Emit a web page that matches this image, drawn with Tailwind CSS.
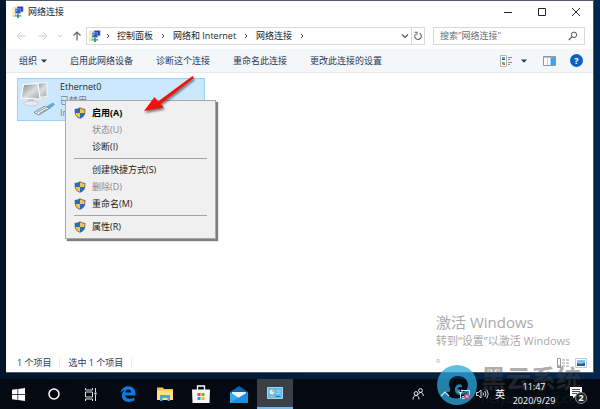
<!DOCTYPE html>
<html lang="zh-CN">
<head>
  <meta charset="UTF-8">
  <title>网络连接</title>
  <meta name="viewport" content="width=device-width, initial-scale=1.0">
  <script src="https://cdn.jsdelivr.net/npm/@tailwindcss/browser@4"></script>
</head>
<body class="relative flex h-screen flex-col overflow-hidden bg-gradient-to-r from-[#03152b] to-[#04264c] font-['Open_Sans','Noto_Sans_CJK_SC',sans-serif] text-[9px] leading-3 text-[#222]">

  <!-- Shared icons -->
  <svg class="hidden">
    <symbol id="shield" viewBox="0 0 12 12">
      <path d="M6 .3C4.6 1.4 2.800 1.900.7 1.900V5.500C.7 8.600 3 10.600 6 11.800 9 10.600 11.300 8.600 11.300 5.500V1.900C9.200 1.900 7.400 1.400 6 .3Z" fill="#55606c"/>
      <path d="M6 1.300C4.700 2.200 3.200 2.600 1.500 2.700V6H6Z" fill="#1c6fd0"/>
      <path d="M6 1.300C7.300 2.200 8.800 2.600 10.500 2.700V6H6Z" fill="#fcc43a"/>
      <path d="M1.500 6H6V10.900C3.500 9.900 1.700 8.400 1.500 6Z" fill="#fcc43a"/>
      <path d="M10.500 6H6V10.900C8.500 9.900 10.300 8.400 10.500 6Z" fill="#1c6fd0"/>
    </symbol>
    <symbol id="netfolder" viewBox="0 0 13 13">
      <path d="M.5 1.500 4.500 .5V11L.5 12Z" fill="#f2dc94"/>
      <path d="M1 2 3 1.500V10L1 10.500Z" fill="#fbf0c4"/>
      <rect x="5.500" y=".8" width="6.500" height="5.500" fill="#1d35b8" stroke="#9aa7b8" stroke-width=".7"/>
      <rect x="3.500" y="3" width="6" height="5" fill="#2c55dc" stroke="#a9b4c4" stroke-width=".7"/>
      <path d="M4.500 4h2.500l-2.500 2.500z" fill="#7fb4ff"/>
      <path d="M5.500 8.500h2V10H10v1.500H7.500V13H5.500v-1.500H3V10h2.500z" fill="#27a567"/>
    </symbol>
    <symbol id="chev" viewBox="0 0 6 6"><path d="M2 1 4 3 2 5" fill="none" stroke="#444" stroke-width="1"/></symbol>
  </svg>

  <!-- Window -->
  <main class="relative mx-1.5 mb-1.5 flex min-h-0 flex-1 flex-col border-t border-r border-b border-[#555b66] bg-white">
    <header class="flex h-[22px] items-center pl-1.5">
      <svg class="mr-1 size-3"><use href="#netfolder"/></svg>
      <h1 class="flex-1">网络连接</h1>
      <button aria-label="最小化" class="flex w-[34px] justify-center"><svg class="size-2.5" viewBox="0 0 10 10"><path d="M1 5.500h8" stroke="#222"/></svg></button>
      <button aria-label="最大化" class="flex w-[34px] justify-center"><svg class="size-2.5" viewBox="0 0 10 10"><path d="M1.500 1.500h7v7h-7z" fill="none" stroke="#222"/></svg></button>
      <button aria-label="关闭" class="flex w-[34px] justify-center"><svg class="size-2.5" viewBox="0 0 10 10"><path d="M1 1l8 8M9 1 1 9" stroke="#222"/></svg></button>
    </header>

    <!-- Address bar -->
    <div class="flex h-[26px] items-center pr-2 pl-2.5">
      <button aria-label="后退" class="mr-3"><svg class="size-2.5" viewBox="0 0 10 10"><path d="M9.500 5H1M4.500 1.500 1 5l3.500 3.500" fill="none" stroke="#ccc"/></svg></button>
      <button aria-label="前进" class="mr-2"><svg class="size-2.5" viewBox="0 0 10 10"><path d="M.5 5H9M5.500 1.500 9 5 5.500 8.500" fill="none" stroke="#ccc"/></svg></button>
      <button aria-label="最近位置" class="mr-2"><svg class="size-2" viewBox="0 0 8 8"><path d="M2 3l2 2 2-2" fill="none" stroke="#ccc"/></svg></button>
      <button aria-label="向上" class="mr-1"><svg class="size-2.5" viewBox="0 0 10 10"><path d="M5 9.500V1M1.500 4.500 5 1l3.500 3.500" fill="none" stroke="#666" stroke-width="1.200"/></svg></button>
      <nav class="flex h-[18px] flex-1 items-center border border-[#d9d9d9] pl-0.5">
        <svg class="mr-1 size-3"><use href="#netfolder"/></svg>
        <svg class="mr-1.5 size-1.5"><use href="#chev"/></svg>
        <a href="#">控制面板</a>
        <svg class="mx-[7px] size-1.5"><use href="#chev"/></svg>
        <a href="#">网络和 Internet</a>
        <svg class="mx-[7px] size-1.5"><use href="#chev"/></svg>
        <a href="#">网络连接</a>
        <svg class="mx-[7px] size-1.5"><use href="#chev"/></svg>
        <button aria-label="展开" class="ml-auto px-0.5"><svg class="size-2" viewBox="0 0 8 8"><path d="M1 2.500l3 3 3-3" fill="none" stroke="#555" stroke-width="1.200"/></svg></button>
        <button aria-label="刷新" class="flex h-full w-[13px] items-center justify-center border-l border-[#d9d9d9]"><svg class="size-2.5" viewBox="0 0 10 10"><path d="M6.500 2.200A3.300 3.300 0 1 1 2.500 3M1.500 1.200h2.500v2.800" fill="none" stroke="#666" stroke-width="1.100"/></svg></button>
      </nav>
      <label class="ml-2 flex h-[18px] w-[152px] items-center border border-[#d9d9d9] px-1.5">
        <input aria-label="搜索" class="min-w-0 flex-1 outline-none placeholder:text-[#6d6d6d]" placeholder='搜索"网络连接"'>
        <svg class="size-2.5" viewBox="0 0 10 10"><circle cx="6" cy="3.800" r="2.700" fill="none" stroke="#555"/><path d="M4 5.800.8 9" stroke="#555" stroke-width="1.200"/></svg>
      </label>
    </div>

    <!-- Command bar -->
    <div class="flex h-6 items-center gap-[23px] border-b border-[#e6e9ee] bg-[#f5f6f8] pr-2.5 pl-[13px] text-[#1e395b]">
      <button class="flex items-center gap-1">组织<svg class="size-1.5" viewBox="0 0 6 6"><path d="M0 1.500h6L3 4.700z" fill="#1e395b"/></svg></button>
      <button>启用此网络设备</button>
      <button>诊断这个连接</button>
      <button>重命名此连接</button>
      <button>更改此连接的设置</button>
      <div class="ml-auto flex items-center">
        <button aria-label="更改视图" class="mr-4 flex items-center gap-2">
          <svg class="h-3 w-[13px]" viewBox="0 0 13 12"><path d="M.5.5h6v11h-6z" fill="#fff" stroke="#b3b8be"/><path d="M2 2h3v3H2z" fill="#5aa7e0"/><path d="M2 4h3v1H2z" fill="#314f74"/><path d="M2 7h3v3H2z" fill="#e7b34e"/><path d="M2 7h1.500v1.500H2z" fill="#3ba55c"/><path d="M3.500 8.500H5V10H3.500z" fill="#d05040"/><path d="M8 2.500h4M8 4.500h2M8 7.500h4M8 9.500h2" stroke="#8a9099"/></svg>
          <svg class="size-1.5" viewBox="0 0 6 6"><path d="M0 1.500h6L3 4.700z" fill="#1e395b"/></svg>
        </button>
        <button aria-label="预览窗格" class="mr-3.5"><svg class="h-2.5 w-[13px]" viewBox="0 0 13 10"><path d="M.5.5h12v9H.5z" fill="#fff" stroke="#8f959d"/><path d="M1 1.500h11" stroke="#b9bec5"/><path d="M4.500 1v8" stroke="#c5c9ce"/><path d="M7.500 1.500H12V9H7.500z" fill="#3f9fe8"/></svg></button>
        <button aria-label="帮助" class="flex size-[13px] items-center justify-center rounded-full bg-[#0a62c4] font-bold text-white">?</button>
      </div>
    </div>

    <!-- Connections -->
    <section class="flex-1 pt-[5px] pl-[11px]">
      <div class="flex h-[43px] w-[188px] gap-1 border border-[#99d1ff] bg-[#cce8ff] pt-0.5 pl-0.5">
        <svg class="h-[38px] w-9 shrink-0" viewBox="0 0 36 38">
          <defs><linearGradient id="scr" x2="1" y2="1"><stop stop-color="#7d8287"/><stop offset=".55" stop-color="#dcdee0"/><stop offset="1" stop-color="#a4a8ad"/></linearGradient></defs>
          <path d="M14 2.500 27 1.500V15.500L14 17Z" fill="url(#scr)" stroke="#f4f5f6"/>
          <path d="M18 17l6-1 4 4.500c-2 2-8 2-10 1z" fill="#dfe1e3"/>
          <path d="M3.500 3.500 18 2.500 20 18 1 17Z" fill="url(#scr)" stroke="#fafafa" stroke-width="1.200"/>
          <path d="M8 18h6v4H8z" fill="#c4c7cb"/>
          <ellipse cx="11" cy="22.500" rx="7" ry="2.500" fill="#e9ebec" stroke="#b7babf" stroke-width=".6"/>
          <path d="M14 31.500 24 25.500l6 1.500-11 7z" fill="#eef2f5" stroke="#5f7482" stroke-width=".8"/>
          <path d="M17 31.500l8-4.500M19.500 32.500l7.500-4.500" stroke="#6d8594" stroke-width=".8"/>
          <path d="M27 25.500 33 22l1.500 1.500-5 4z" fill="#5fb3e0" stroke="#4b8bb0" stroke-width=".6"/>
        </svg>
        <div>
          <p>Ethernet0</p>
          <p class="mt-0.5 text-[#7a828a]">已禁用</p>
          <p class="text-[#7a828a]">In</p>
        </div>
      </div>
    </section>

    <footer class="flex h-[18px] items-center pr-1.5 pl-[11px] text-[#1e395b]">
      <span class="border-r border-[#eee] pr-2">1 个项目</span>
      <span class="border-r border-[#eee] px-2">选中 1 个项目</span>
      <button aria-label="详细信息" class="mr-1.5 ml-auto"><svg class="h-2.5 w-3" viewBox="0 0 12 10"><path d="M.5.5h3v9h-3z" fill="#fff" stroke="#999"/><path d="M5 2h3M9 2h3M5 5h3M9 5h3M5 8h3M9 8h3" stroke="#999"/><path d="M1 8h2" stroke="#c44"/></svg></button>
      <button aria-label="大图标"><svg class="h-2.5 w-3" viewBox="0 0 12 10"><path d="M.5.5h11v9H.5z" fill="#fff" stroke="#b5cfe2"/><path d="M2 2h8v6H2z" fill="#7cc0ee"/><path d="M2 8V5l3 1 5-1v3z" fill="#2c5a84"/></svg></button>
    </footer>

    <!-- Context menu -->
    <menu class="absolute top-[99px] left-[59px] w-[151px] border border-[#a8a8a8] bg-[#f0f0f0] py-[3px] shadow-[2px_2px_1px_#00000080]">
      <li><button class="flex h-[17px] w-full items-center gap-1.5 pl-2 font-bold text-black"><svg class="size-3"><use href="#shield"/></svg>启用(A)</button></li>
      <li><button disabled class="flex h-[17px] w-full items-center pl-[26px] text-[#8a8a8a]">状态(U)</button></li>
      <li><button class="flex h-[17px] w-full items-center pl-[26px]">诊断(I)</button></li>
      <li class="px-2 pt-[3px] pb-0.5"><hr class="border-[#a5a5a5]"></li>
      <li><button class="flex h-[17px] w-full items-center pl-[26px]">创建快捷方式(S)</button></li>
      <li><button disabled class="flex h-[17px] w-full items-center gap-1.5 pl-2 text-[#8a8a8a]"><svg class="size-3"><use href="#shield"/></svg>删除(D)</button></li>
      <li><button class="flex h-[17px] w-full items-center gap-1.5 pl-2"><svg class="size-3"><use href="#shield"/></svg>重命名(M)</button></li>
      <li class="px-2 pt-[3px] pb-0.5"><hr class="border-[#a5a5a5]"></li>
      <li><button class="flex h-[17px] w-full items-center gap-1.5 pl-2"><svg class="size-3"><use href="#shield"/></svg>属性(R)</button></li>
    </menu>

    <!-- Red pointer -->
    <svg class="absolute top-[73px] left-[136px] h-10 w-14 drop-shadow-[1px_2px_1px_#00000080]" viewBox="0 0 56 40">
      <path d="M2 37 12.500 23 16 27.500 50.500 2 52 4 18.500 30 22 33.500Z" fill="#f3110c"/>
    </svg>

    <!-- Activation notice -->
    <div class="absolute right-4 bottom-1.5 w-[141px] text-[#a9a9a9]">
      <p class="text-[15px] leading-5">激活 Windows</p>
      <p class="text-[11px] leading-[17px]">转到“设置”以激活 Windows 。</p>
    </div>
  </main>

  <!-- Taskbar -->
  <footer class="flex h-[30px] shrink-0 items-stretch bg-[#050a12] text-white">
    <button aria-label="开始" class="flex w-9 items-center justify-center"><svg class="size-[13px]" viewBox="0 0 13 13"><path d="M0 1.800 5.500 1V6.200H0zM6.200.9 13 0V6.200H6.200zM0 6.900H5.500V12L0 11.200zM6.200 6.900H13V13L6.200 12.100z" fill="#fff"/></svg></button>
    <button aria-label="搜索" class="flex w-9 items-center justify-center"><svg class="size-3" viewBox="0 0 12 12"><circle cx="6" cy="6" r="5" fill="none" stroke="#fff" stroke-width="1.500"/></svg></button>
    <button aria-label="任务视图" class="flex w-9 items-center justify-center"><svg class="size-[13px]" viewBox="0 0 13 13"><path d="M1.500 4h7v5h-7zM1.500 0v2h7V0M1.500 13v-2h7v2M11.500 0v4M11.500 7v6" fill="none" stroke="#ddd"/><path d="M10.500 4.500h2v2h-2z" fill="#fff"/></svg></button>
    <button aria-label="Edge" class="flex w-10 items-center justify-center"><svg class="size-4" viewBox="0 0 16 16"><path d="M.5 7.200C1.200 2.700 4.300.3 8.200.3c4.800 0 7.300 3.500 7.300 7.300v1.800H5.200c.1 2.300 2.200 3.300 4.500 3.300 1.900 0 3.400-.5 4.700-1.300v3.200c-1.400.8-3.300 1.300-5.400 1.300-4.300 0-7.200-2.500-7.200-6.400 0-2.600 1.400-4.600 3.600-5.700C3.200 4.300 1.500 5.400.5 7.200ZM5.300 6.600h5.800c0-2-1-3-2.800-3-1.600 0-2.700 1.200-3 3Z" fill="#0a7be0"/></svg></button>
    <button aria-label="文件资源管理器" class="flex w-[34px] items-center justify-center"><svg class="h-[14px] w-4" viewBox="0 0 16 14"><path d="M0 .5h6l1 1.500h9V13H0z" fill="#f2c14e"/><path d="M0 3.500h16V13H0z" fill="#fde08a"/><path d="M3 8h10v6h-2.500v-3h-5v3H3z" fill="#3cabea"/></svg></button>
    <button aria-label="Microsoft Store" class="flex w-[38px] items-center justify-center"><svg class="size-[18px]" viewBox="0 0 18 18"><path d="M5.500 5V1h7v4" fill="none" stroke="#fff" stroke-width="1.300"/><path d="M0 4.500h18L17.500 18H.5z" fill="#f5f5f5"/><path d="M5.500 8h3v3h-3z" fill="#e8472b"/><path d="M9.500 8h3v3h-3z" fill="#6fb52a"/><path d="M5.500 12h3v3h-3z" fill="#1f9be6"/><path d="M9.500 12h3v3h-3z" fill="#fcb813"/></svg></button>
    <button aria-label="邮件" class="flex w-[37px] items-center justify-center"><svg class="h-[17px] w-[18px]" viewBox="0 0 18 17"><path d="M0 6 9 0l9 6v3H0z" fill="#0d5fb0"/><path d="M2 6h14v6H2z" fill="#eef4fa"/><path d="M0 6l9 6 9-6v11H0z" fill="#35a9ec"/><path d="M0 17 18 6v11z" fill="#1c8fdc"/></svg></button>
    <button aria-label="控制面板" class="flex w-9 items-center justify-center border-b-2 border-[#76b9ed] bg-[#3b3f46]"><svg class="h-3 w-4" viewBox="0 0 16 12"><path d="M.5.500h15v11H.5z" fill="#5bb9ee" stroke="#9bd8f8"/><circle cx="5" cy="5" r="2.500" fill="#d5effc"/><path d="M5 5V2.500A2.500 2.500 0 0 1 7.500 5z" fill="#f3b93c"/><path d="M9 4h1.500M12 4h2M9 6.500h3M11.500 2.500v3M13 5.500v2" stroke="#b9e3f8" stroke-width=".8"/><path d="M3 9.500h4" stroke="#f3b93c"/><path d="M9 9.500h4" stroke="#2a7bb5"/></svg></button>

    <!-- Tray -->
    <div class="relative z-10 ml-auto flex items-center">
      <button aria-label="人脉" class="mr-4"><svg class="size-3" viewBox="0 0 12 12"><g fill="none" stroke="#eee"><circle cx="8.500" cy="2.500" r="1.900"/><circle cx="4" cy="5.500" r="1.900"/><path d="M1 11.500c0-2.500 1-4 3-4s3 1.500 3 4M6.500 6.500c.5-1.200 1.200-2 2.200-2 1.800 0 2.600 1.500 2.600 3.500"/></g></svg></button>
      <button aria-label="显示隐藏的图标" class="mr-2"><svg class="size-2.5" viewBox="0 0 10 10"><path d="M1 7l4-4 4 4" fill="none" stroke="#cdeaf5" stroke-width="1.200"/></svg></button>
      <button aria-label="网络" class="mr-1.5"><svg class="size-3" viewBox="0 0 12 12"><path d="M3 2.500h8.500v6H4M1 1.500v3h3v-3M2.500 4.500v6M4 10.500h4" fill="none" stroke="#cdeaf5"/><circle cx="9" cy="8.500" r="3" fill="#b8507c"/><path d="M7.800 7.300l2.400 2.400M10.200 7.300 7.800 9.700" stroke="#fff" stroke-width=".8"/></svg></button>
      <button aria-label="音量" class="mr-1.5"><svg class="h-3 w-[13px]" viewBox="0 0 13 12"><path d="M.5 4.500H2.500L5 2v8L2.500 7.500H.5zM7 4.500q1 1.500 0 3M8.800 3q2.200 3 0 6M10.700 1.500q3 4.500 0 9" fill="none" stroke="#eee" stroke-width=".9"/></svg></button>
      <button class="mr-1.5 text-[10px]">英</button>
      <time class="mr-3 w-[46px] text-center leading-[14px]">11:47<br>2020/9/29</time>
      <button aria-label="通知" class="relative mr-3"><svg class="h-4 w-[19px]" viewBox="0 0 19 16"><path d="M1 1h12v9H6.500L4 12.500V10H1z" fill="#fff"/><path d="M3 3.500h8M3 5.500h8M3 7.500h5" stroke="#222" stroke-width=".8"/></svg><span class="absolute top-1.5 left-1.5 size-3 rounded-full border border-[#888] bg-[#222] text-center leading-2.5 font-bold">2</span></button>
    </div>
  </footer>

  <!-- Site mark laid over the desktop -->
  <div class="pointer-events-none absolute right-0 bottom-1 flex w-[163px] items-center gap-1">
    <svg class="size-10 shrink-0 opacity-75" viewBox="0 0 40 40">
      <path fill-rule="evenodd" d="M20 0a20 20 0 1 0 0 40 20 20 0 0 0 0-40ZM8 27c5 1 6-1 5-4-3-6 1-12 8-12 6 0 10 4 10 9s-4 8-8 7c-3-1-3-5 0-5 1 0 1 1 2 0 1-3-4-4-6-1-3 4 0 9 4 9 3 0 5-1 7-3-4 8-17 9-22 0Z" fill="#2ba9dd"/>
    </svg>
    <div class="text-[#444]/45">
      <p class="text-[25px] leading-[26px] font-bold">黑云系统</p>
      <p class="text-[13px] leading-3.5 text-white/5">heiyunxitong.com</p>
    </div>
  </div>
</body>
</html>
